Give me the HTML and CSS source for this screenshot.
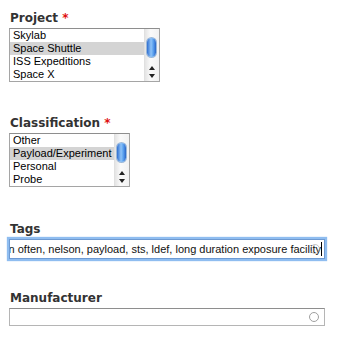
FILE: index.html
```html
<!DOCTYPE html>
<html lang="en">
<head>
    <meta charset="UTF-8">
    <title>Form</title>
    <link rel="stylesheet" href="styles.css">
</head>
<body>
    <div class="field project">
        <label class="field-label">Project <span class="req">*</span></label>
        <div class="listbox wide">
            <ul class="options">
                <li>Skylab</li>
                <li class="selected">Space Shuttle</li>
                <li>ISS Expeditions</li>
                <li>Space X</li>
            </ul>
            <div class="scrollbar">
                <div class="thumb"></div>
                <div class="arrow up"></div>
                <div class="arrow down"></div>
            </div>
        </div>
    </div>

    <div class="field classification">
        <label class="field-label">Classification <span class="req">*</span></label>
        <div class="listbox narrow">
            <ul class="options">
                <li>Other</li>
                <li class="selected">Payload/Experiment</li>
                <li>Personal</li>
                <li>Probe</li>
            </ul>
            <div class="scrollbar">
                <div class="thumb"></div>
                <div class="arrow up"></div>
                <div class="arrow down"></div>
            </div>
        </div>
    </div>

    <div class="field tags">
        <label class="field-label">Tags</label>
        <div class="textbox focused">
            <span class="value">jon often, nelson, payload, sts, ldef, long duration exposure facility</span><span class="caret"></span>
            <span class="spinner"></span>
        </div>
    </div>

    <div class="field manufacturer">
        <label class="field-label">Manufacturer</label>
        <div class="textbox">
            <span class="spinner"></span>
        </div>
    </div>
</body>
</html>
```

FILE: styles.css
```css
body {
    margin: 0;
    padding: 10px 9px 0;
    background-color: #fff;
    font-family: "Liberation Sans", Arial, sans-serif;
}

.field-label {
    display: block;
    font-family: "DejaVu Sans", Verdana, sans-serif;
    font-weight: bold;
    font-size: 12px;
    line-height: 16px;
    color: #333;
    padding-left: 1px;
    margin-bottom: 2px;
}

.req {
    color: #e01010;
}

.project {
    margin-bottom: 33px;
}

.classification {
    margin-bottom: 34px;
}

.tags {
    margin-bottom: 31px;
}

.listbox {
    display: flex;
    height: 52px;
    border: 1px solid #a5a5a5;
    border-top-color: #8e8e8e;
    background-color: #fff;
}

.listbox.wide {
    width: 149px;
}

.listbox.narrow {
    width: 119px;
}

.options {
    flex: 1;
    list-style: none;
    margin: 0;
    padding: 0;
    font-size: 11px;
    line-height: 13px;
    color: #000;
    overflow: hidden;
    white-space: nowrap;
}

.options li {
    padding-left: 3px;
}

.options li.selected {
    background-color: #d4d4d4;
}

.scrollbar {
    position: relative;
    width: 14px;
    background: linear-gradient(to right, #e4e4e4, #fafafa 40%, #f2f2f2);
    border-left: 1px solid #e0e0e0;
}

.thumb {
    position: absolute;
    left: 2px;
    top: 9px;
    width: 9px;
    height: 19px;
    border-radius: 5px;
    background: linear-gradient(to right, #2f6ed0, #8ec3f8 45%, #5aa0ee 70%, #2a66c8);
    box-shadow: 0 0 0 1px #9bb8d8;
}

.arrow {
    position: absolute;
    left: 4px;
    width: 0;
    height: 0;
    border-left: 3px solid transparent;
    border-right: 3px solid transparent;
}

.arrow.up {
    top: 37px;
    border-bottom: 4px solid #222;
}

.arrow.down {
    top: 45px;
    border-top: 4px solid #222;
}

.textbox {
    position: relative;
    display: flex;
    justify-content: flex-end;
    align-items: center;
    width: 314px;
    height: 16px;
    border: 1px solid #b5b5b5;
    border-top-color: #8e8e8e;
}

.textbox.focused {
    height: 18px;
    border-color: #6e9ad2;
    box-shadow: 0 0 1px 2px #8fbdf0;
    font-size: 11px;
    color: #111;
}

.value {
    overflow: hidden;
    white-space: nowrap;
    direction: rtl;
    flex: 1;
    text-align: left;
}

.caret {
    width: 1px;
    height: 14px;
    background-color: #000;
    margin-right: 2px;
}

.spinner {
    position: absolute;
    right: 5px;
    top: 3px;
    width: 8px;
    height: 8px;
    border: 1.5px solid #a0a0a0;
    border-radius: 50%;
}

.focused .spinner {
    top: 4px;
    right: 4px;
    opacity: 0.6;
}
```
